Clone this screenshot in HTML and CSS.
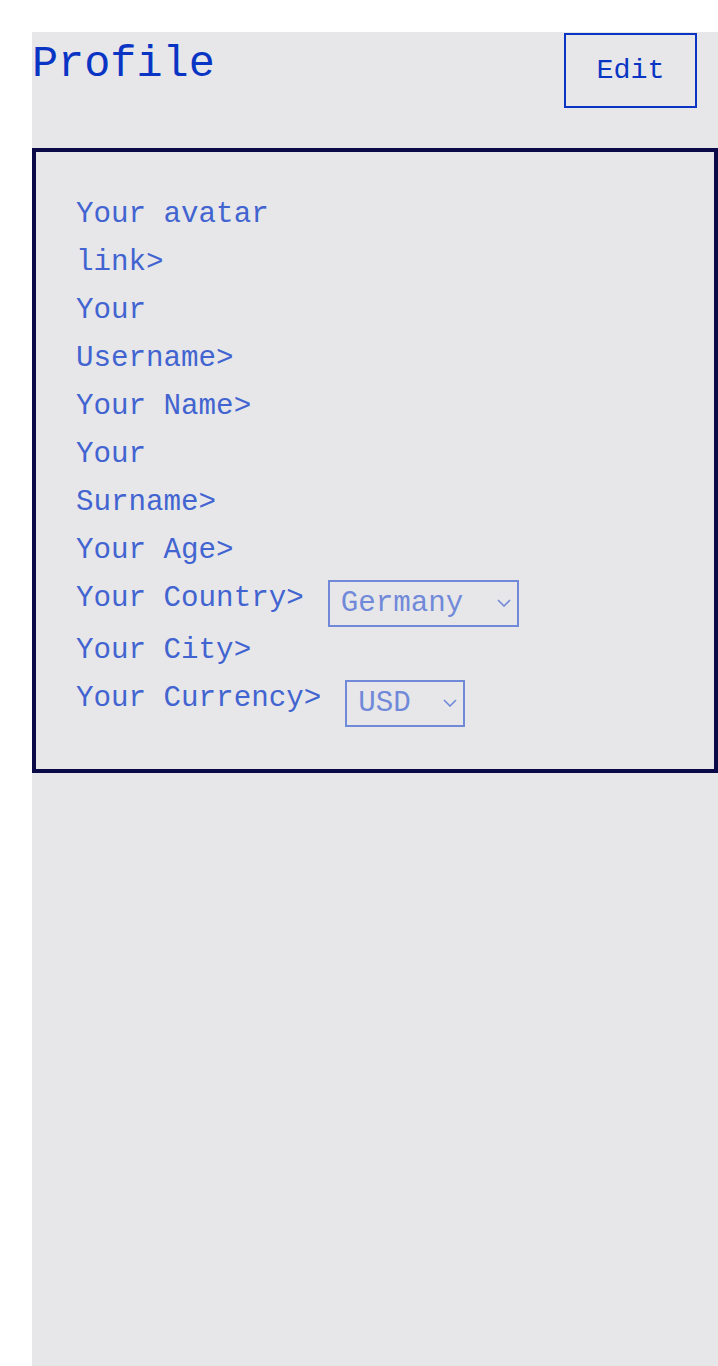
FILE: index.html
```html
<!DOCTYPE html>
<html lang="en">
<head>
<meta charset="utf-8">
<title>Profile</title>
<link rel="stylesheet" href="styles.css">
</head>
<body>
<main class="page">
  <header class="header">
    <h1 class="title">Profile</h1>
    <button class="edit-btn" type="button">Edit</button>
  </header>
  <section class="card">
    <div class="row"><span class="label">Your avatar link&gt;</span></div>
    <div class="row"><span class="label">Your Username&gt;</span></div>
    <div class="row"><span class="label">Your Name&gt;</span></div>
    <div class="row"><span class="label">Your Surname&gt;</span></div>
    <div class="row"><span class="label">Your Age&gt;</span></div>
    <div class="row row-select">
      <span class="label label-nowrap">Your Country&gt;</span>
      <span class="select-wrap select-country">
        <select class="select"><option>Germany</option></select>
        <svg class="chevron" width="14" height="8" viewBox="0 0 14 8"><path d="M1 1 L7 7 L13 1" fill="none" stroke="currentColor" stroke-width="1.6"/></svg>
      </span>
    </div>
    <div class="row"><span class="label">Your City&gt;</span></div>
    <div class="row row-select">
      <span class="label label-nowrap">Your Currency&gt;</span>
      <span class="select-wrap select-currency">
        <select class="select"><option>USD</option></select>
        <svg class="chevron" width="14" height="8" viewBox="0 0 14 8"><path d="M1 1 L7 7 L13 1" fill="none" stroke="currentColor" stroke-width="1.6"/></svg>
      </span>
    </div>
  </section>
</main>
</body>
</html>
```

FILE: styles.css
```css
html, body {
  margin: 0;
  padding: 0;
  background: #ffffff;
}

body {
  padding: 32px 0 0 32px;
  font-family: "Liberation Mono", "DejaVu Sans Mono", monospace;
}

.page {
  background: #e7e7ea;
  min-height: calc(100vh - 32px);
  display: flex;
  flex-direction: column;
}

.header {
  display: flex;
  justify-content: space-between;
  align-items: flex-start;
  padding-right: 21px;
  margin-bottom: 40px;
}

.title {
  margin: 0;
  font-size: 43.5px;
  line-height: 65px;
  font-weight: normal;
  color: #0a35c4;
  letter-spacing: 0;
}

.edit-btn {
  margin-top: 1px;
  width: 133px;
  height: 75px;
  border: 2px solid #0a35c4;
  background: transparent;
  color: #0a35c4;
  font-family: "Liberation Mono", "DejaVu Sans Mono", monospace;
  font-size: 28.4px;
  padding: 0;
}

.card {
  border: 4px solid #0a0a48;
  padding: 39px 20px 42px 40px;
}

.row {
  display: flex;
  align-items: flex-start;
  color: #4264d0;
  font-size: 29.2px;
  line-height: 48px;
}

.label {
  max-width: 12ch;
}

.label-nowrap {
  max-width: none;
  white-space: nowrap;
}

.select-wrap {
  position: relative;
  margin-top: 5px;
  margin-left: 24px;
  height: 47px;
  color: #7189d9;
}

.select {
  appearance: none;
  -webkit-appearance: none;
  box-sizing: border-box;
  height: 47px;
  border: 2px solid #7189d9;
  border-radius: 0;
  background: transparent;
  color: #7189d9;
  font-family: "Liberation Mono", "DejaVu Sans Mono", monospace;
  font-size: 29.2px;
  padding: 0 0 0 11px;
  margin: 0;
  outline: none;
}

.select-country .select {
  width: 191px;
}

.select-currency .select {
  width: 120px;
}

.chevron {
  position: absolute;
  right: 8px;
  top: 19px;
  pointer-events: none;
}
```
